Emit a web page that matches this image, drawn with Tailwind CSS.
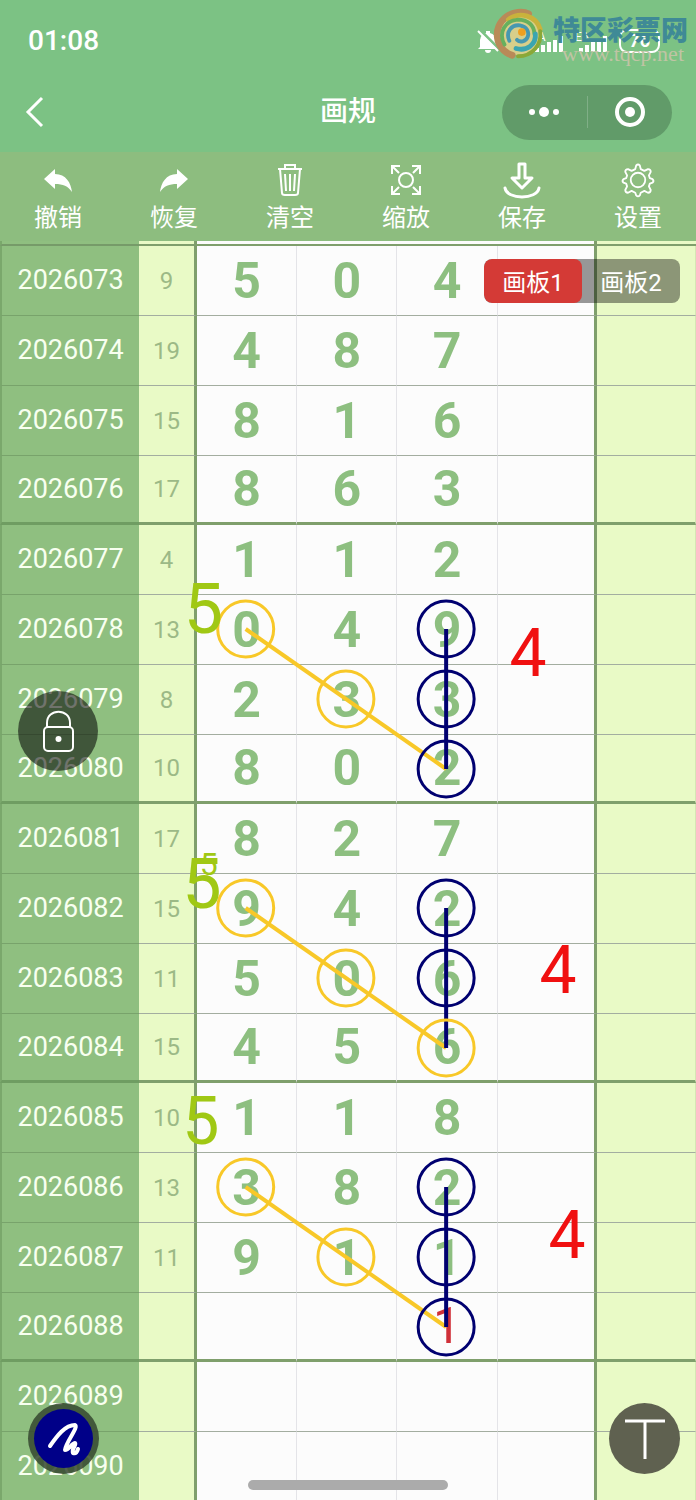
<!DOCTYPE html>
<html lang="zh-CN">
<head>
  <meta charset="UTF-8" />
  <title>画规</title>
  <meta name="viewport" content="width=device-width, initial-scale=1" />
  <script src="https://cdn.jsdelivr.net/npm/@tailwindcss/browser@4"></script>
</head>
<body class="bg-[#fcfcfc] font-['Roboto','Noto_Sans_CJK_SC',sans-serif]">
  <div class="relative flex h-screen flex-col overflow-hidden">

    <header class="shrink-0 bg-[#7cc284] pb-[10px] text-white">
      <!-- Status bar -->
      <div class="relative flex h-[82px] items-center justify-between pl-7 pr-9">
        <span class="text-[28px] font-medium">01:08</span>
        <div class="flex items-center gap-3">
          <svg class="h-6 w-6" viewBox="0 0 24 24" fill="#fff"><path d="M5 18V11a8 8 0 0 1 6-7V2h4v2a8 8 0 0 1 6 7v7l2 2H3zM10 21h6a3 3 0 0 1-6 0z"/><path d="M4 0l22 22" stroke="#7cc284" stroke-width="3"/><path d="M3 2l20 20" stroke="#fff" stroke-width="2"/></svg>
          <svg class="h-6 w-2" viewBox="0 0 8 24" fill="#fff"><path d="M0 22v-5h3v5zM5 22V16h3v6z"/></svg>
          <svg class="h-7 w-8" viewBox="0 0 32 28" fill="#fff"><path d="M4 25v-4h4v4zM10 25v-7h4v7zM16 25V15h4v10zM22 25V13h4v12zM28 25V9h4v16z"/><text x="0" y="14" class="text-[12px]">EA</text></svg>
          <svg class="h-7 w-8" viewBox="0 0 32 28" fill="#fff"><path d="M4 25v-4h4v4zM10 25v-7h4v7zM16 25V15h4v10zM22 25V13h4v12zM28 25V9h4v16z"/><text x="0" y="14" class="text-[12px]">EA</text></svg>
          <span class="rounded-lg border-2 border-white px-2 text-lg leading-5 font-bold">76</span>
        </div>
        <!-- Site watermark -->
        <div class="absolute top-2 right-2 flex items-start gap-2">
          <svg class="h-[54px] w-[54px]" viewBox="-2 0 56 56" fill="none" stroke-linecap="round">
            <circle cx="27" cy="28" r="21" fill="#d8cf8a"/>
            <path d="M20 49C2 43-1 20 14 9c7-5 17-6 23-3" stroke="#b98a58" stroke-width="7"/>
            <path d="M16 12c12-9 29-4 33 10" stroke="#c9b23c" stroke-width="5"/>
            <path d="M49 24c2 14-8 26-23 26" stroke="#8aa838" stroke-width="4"/>
            <path d="M12 38c-7-13 1-25 14-26 10 0 17 6 17 15" stroke="#67b05e" stroke-width="4"/>
            <path d="M44 27c1 11-9 18-20 15" stroke="#3ba5b0" stroke-width="5"/>
            <path d="M17 34c-4-9 2-17 11-16 7 1 10 7 8 12-2 5-8 6-11 3" stroke="#4798b0" stroke-width="4"/>
            <circle cx="30" cy="25" r="4" fill="#efa020"/>
          </svg>
          <div class="text-[27px] leading-[46px] font-black text-[#3f8a96]">特区彩票网</div>
        </div>
        <div class="absolute top-10 right-3 font-['Liberation_Serif',serif] text-[22px] leading-7 text-[#c0c4a4]">www.tqcp.net</div>
      </div>

      <!-- Title bar -->
      <div class="grid h-[60px] grid-cols-[1fr_auto_1fr] items-center px-6">
        <button class="h-8 w-6" aria-label="返回">
          <svg class="h-8 w-6" viewBox="0 0 24 32" fill="none" stroke="#fff" stroke-width="3"><path d="M18 2L4 16l14 14"/></svg>
        </button>
        <h1 class="text-[28px] leading-10 font-medium">画规</h1>
        <div class="flex h-[55px] w-[170px] items-center justify-self-end rounded-full bg-[#619b69]">
          <button class="flex flex-1 justify-center" aria-label="更多">
            <svg class="h-8 w-8" viewBox="0 0 32 32" fill="#fff"><circle cx="4" cy="16" r="3"/><circle cx="16" cy="16" r="5"/><circle cx="28" cy="16" r="3"/></svg>
          </button>
          <span class="h-8 w-px bg-white/20"></span>
          <button class="flex flex-1 justify-center" aria-label="关闭">
            <svg class="h-8 w-8" viewBox="0 0 32 32"><circle cx="16" cy="16" r="13" fill="none" stroke="#fff" stroke-width="4"/><circle cx="16" cy="16" r="5" fill="#fff"/></svg>
          </button>
        </div>
      </div>
    </header>

    <!-- Toolbar -->
    <nav class="grid h-[89px] shrink-0 grid-cols-6 bg-[#8dbd7f] text-2xl leading-7 text-white">
      <button class="flex flex-col items-center gap-1 pt-2">
        <svg class="h-10 w-10" viewBox="0 0 40 40" fill="#fff"><path d="M6 19L17 9v5c11 0 16 9 17 18-4-6-9-8-17-8v5z"/></svg>
        <span>撤销</span>
      </button>
      <button class="flex flex-col items-center gap-1 pt-2">
        <svg class="h-10 w-10" viewBox="0 0 40 40" fill="#fff"><path d="M34 19L23 9v5C12 14 7 23 6 32c4-6 9-8 17-8v5z"/></svg>
        <span>恢复</span>
      </button>
      <button class="flex flex-col items-center gap-1 pt-2">
        <svg class="h-10 w-10" viewBox="0 0 40 40" fill="none" stroke="#fff" stroke-width="2"><path d="M8 9h24M15 9V5h10v4M10 9l2 24q0 2 3 2h10q3 0 3-2l2-24M15 14l1 17M20 14v17M25 14l-1 17"/></svg>
        <span>清空</span>
      </button>
      <button class="flex flex-col items-center gap-1 pt-2">
        <svg class="h-10 w-10" viewBox="0 0 40 40" fill="none" stroke="#fff" stroke-width="2"><circle cx="20" cy="20" r="7"/><path d="M6 14V6h8M26 6h8v8M34 26v8h-8M14 34H6v-8M6 6l7 7M34 6l-7 7M34 34l-7-7M6 34l7-7"/></svg>
        <span>缩放</span>
      </button>
      <button class="flex flex-col items-center gap-1 pt-2">
        <svg class="h-10 w-10" viewBox="0 0 40 40" fill="none" stroke="#fff" stroke-width="3" stroke-linecap="round" stroke-linejoin="round"><path d="M17 4h6v14h7L20 28 10 18h7z"/><path d="M3 28c2 12 32 12 34 0"/></svg>
        <span>保存</span>
      </button>
      <button class="flex flex-col items-center gap-1 pt-2">
        <svg class="h-10 w-10" viewBox="-2 -2 44 44" fill="none" stroke="#fff" stroke-width="2" stroke-linejoin="round"><circle cx="20" cy="20" r="8"/><path d="M18 4q2-2 4 0l1 4 4 2 4-2q3 0 3 3l-2 4 1 3 3 1q2 2 0 4l-3 1-1 3 2 4q0 3-3 3l-4-2-4 2-1 3q-2 2-4 0l-1-3-4-2-4 2q-3 0-3-3l2-4-1-3-3-1q-2-2 0-4l3-1 1-3-2-4q0-3 3-3l4 2 4-2z"/></svg>
        <span>设置</span>
      </button>
    </nav>

    <!-- Chart -->
    <main class="relative">
      <table class="w-full table-fixed border-separate border-spacing-0 text-center">
        <colgroup>
          <col class="w-[20%]"><col class="w-[8.3%]"><col class="w-[14.4%]"><col class="w-[14.4%]"><col class="w-[14.4%]"><col class="w-[14.3%]"><col class="w-[14.2%]">
        </colgroup>
        <tbody id="rows"></tbody>
      </table>

      <!-- Drawn marks: x in % of the chart, y in px from its top -->
      <svg class="pointer-events-none absolute inset-0 h-full w-full" fill="none">
        <g id="marks"></g>
        <g fill="#a0c814" class="text-[70px]">
          <text x="26.4%" y="392">5</text>
          <text x="26.2%" y="667">5</text>
        </g>
        <text x="28.7%" y="634" fill="#a0c814" class="text-[32px]">5</text>
        <g class="text-[66px]">
          <text x="26.2%" y="903" fill="#a0c814">5</text>
          <text x="73.2%" y="435" fill="#f01010">4</text>
          <text x="77.5%" y="752" fill="#f01010">4</text>
          <text x="78.8%" y="1017" fill="#f01010">4</text>
        </g>
      </svg>

      <!-- Board tabs -->
      <div class="absolute top-[18px] right-4 flex h-11 w-[196px] overflow-hidden rounded-lg bg-black/40 text-2xl text-white">
        <button class="flex-1 rounded-lg bg-[#d43a36] pt-1">画板1</button>
        <button class="flex-1 pt-1">画板2</button>
      </div>
    </main>

    <!-- Floating buttons -->
    <button class="absolute top-[691px] left-[18px] flex size-20 items-center justify-center rounded-full bg-black/55" aria-label="锁定">
      <svg class="h-12 w-10" viewBox="0 0 40 48" fill="none" stroke="#fff" stroke-width="2"><rect x="6" y="20" width="29" height="24" rx="4"/><path d="M9 20v-4C9 1 32 1 32 16v4"/><circle cx="20.5" cy="32" r="3" fill="#fff" stroke="none"/></svg>
    </button>
    <button class="absolute bottom-[26px] left-7 flex size-[71px] items-center justify-center rounded-full bg-[#35472f]/85" aria-label="画笔">
      <span class="flex size-[59px] items-center justify-center rounded-full bg-[#000088]">
        <svg class="size-10" viewBox="0 0 40 40" fill="none" stroke="#fff" stroke-width="4" stroke-linecap="round" stroke-linejoin="round"><path d="M6 27C13 17 21 6 31 6c4 2-9 17-10 25 4 0 7-7 10-7 2 2-4 6-2 10 3 1 4-1 5-4"/></svg>
      </span>
    </button>
    <button class="absolute right-4 bottom-[26px] flex size-[71px] items-center justify-center rounded-full bg-[#5f6150]" aria-label="文字">
      <svg class="size-10" viewBox="0 0 40 40" stroke="#fff" stroke-width="3"><path d="M0 2h40M20 2v38"/></svg>
    </button>
    <div class="absolute bottom-[10px] left-1/2 h-[10px] w-[200px] -translate-x-1/2 rounded-full bg-[#ababab]"></div>
  </div>

  <script>
    // [issue, sum, digits]
    const draws = [
      ["2026073", "9", "504"], ["2026074", "19", "487"], ["2026075", "15", "816"], ["2026076", "17", "863"],
      ["2026077", "4", "112"], ["2026078", "13", "049"], ["2026079", "8", "233"], ["2026080", "10", "802"],
      ["2026081", "17", "827"], ["2026082", "15", "942"], ["2026083", "11", "506"], ["2026084", "15", "456"],
      ["2026085", "10", "118"], ["2026086", "13", "382"], ["2026087", "11", "911"], ["2026088", "", "  1"],
      ["2026089", "", ""], ["2026090", "", ""],
    ];

    let html = `
      <tr>
        <td class="h-[5px] border-b-2 border-l-2 border-l-[#7aa86c] border-b-[#769b69] bg-[#8fbf80] p-0"></td>
        <td class="h-[5px] border-b-2 border-r-3 border-[#7f9f6c] bg-[#e9fac6] p-0"></td>
        <td class="h-[5px] border-b-2 border-[#7f9f6c] p-0" colspan="3"></td>
        <td class="h-[5px] border-b-2 border-r-3 border-[#7f9f6c] p-0"></td>
        <td class="h-[5px] border-b-2 border-[#7f9f6c] bg-[#e9fac6] p-0"></td>
      </tr>`;

    draws.forEach(([issue, sum, digits], i) => {
      // every fourth row closes a group with a thick line
      const line = i % 4 === 3 ? "h-[69px] border-b-3 border-b-[#7f9f6c]" : "h-[70px] border-b border-b-[#a3ada0]";
      const issueLine = i % 4 === 3 ? "h-[69px] border-b-3 border-b-[#6f9d62]" : "h-[70px] border-b border-b-[#78a36b]";
      const cells = [0, 1, 2].map(n => {
        const color = issue === "2026088" ? "text-[#d03038] font-normal" : "text-[#8dbf80] font-bold";
        return `<td class="${line} ${color} border-r border-r-[#e4e4e8] p-0 text-[50px] leading-none">${(digits[n] || "").trim()}</td>`;
      }).join("");
      html += `
        <tr>
          <td class="${issueLine} border-l-2 border-l-[#7aa86c] bg-[#8fbf80] p-0 text-[27px] leading-none text-[#f8fff0]">${issue}</td>
          <td class="${line} border-r-3 border-r-[#7f9f6c] bg-[#e9fac6] p-0 text-2xl leading-none text-[#9cb986]">${sum}</td>
          ${cells}
          <td class="${line} border-r-3 border-r-[#7f9f6c] p-0"></td>
          <td class="${line} border-r border-r-[#d5e6b4] bg-[#e9fac6] p-0"></td>
        </tr>`;
    });
    document.getElementById("rows").innerHTML = html;

    const colX = ["35.3%", "49.7%", "64.1%"];
    const rowY = i => 4 + Math.floor(i / 4) * 279 + (i % 4) * 70 + 35;
    const yellow = "#f8c828", navy = "#000070";
    const circle = (c, r, color) => `<circle cx="${colX[c]}" cy="${rowY(r)}" r="28" stroke="${color}" stroke-width="3"/>`;
    const link = (c1, r1, c2, r2, color) => `<line x1="${colX[c1]}" y1="${rowY(r1)}" x2="${colX[c2]}" y2="${rowY(r2)}" stroke="${color}" stroke-width="4"/>`;

    let marks = "";
    [5, 9, 13].forEach(r => {
      marks += circle(0, r, yellow) + circle(1, r + 1, yellow) + link(0, r, 2, r + 2, yellow);
      marks += circle(2, r, navy) + circle(2, r + 1, navy) + link(2, r, 2, r + 2, navy);
      marks += circle(2, r + 2, r === 9 ? yellow : navy);
    });
    document.getElementById("marks").innerHTML = marks;
  </script>
</body>
</html>
